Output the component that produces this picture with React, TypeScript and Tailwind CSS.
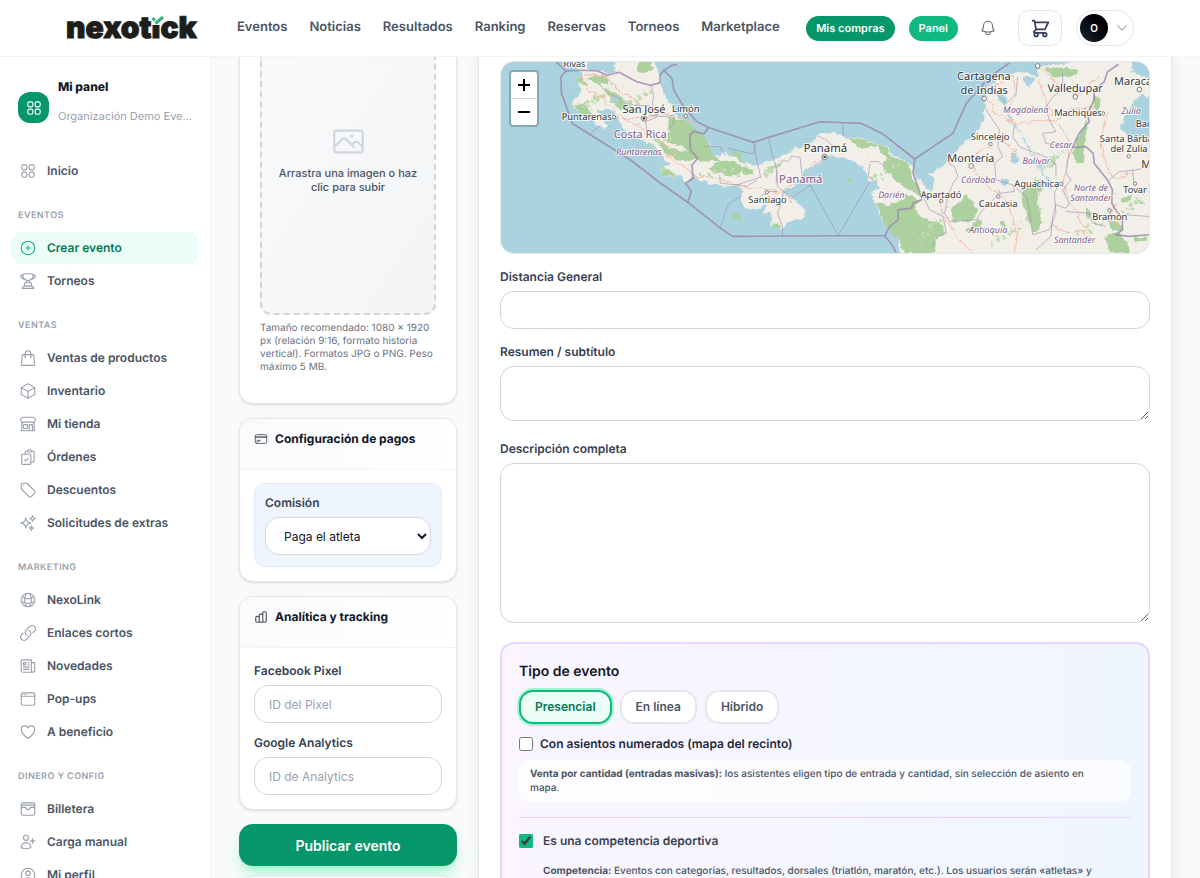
import type { ComponentType, ReactNode } from "react";
import { HiOutlineChartBar, HiOutlineShoppingCart } from "react-icons/hi";
import {
	HiOutlineBell,
	HiOutlineBuildingStorefront,
	HiOutlineChevronDown,
	HiOutlineClipboardDocumentCheck,
	HiOutlineCreditCard,
	HiOutlineCube,
	HiOutlineGlobeAlt,
	HiOutlineHeart,
	HiOutlineLink,
	HiOutlineNewspaper,
	HiOutlinePhoto,
	HiOutlinePlusCircle,
	HiOutlineShoppingBag,
	HiOutlineSparkles,
	HiOutlineSquares2X2,
	HiOutlineTag,
	HiOutlineTrophy,
	HiOutlineUserCircle,
	HiOutlineUserPlus,
	HiOutlineWallet,
	HiOutlineWindow,
} from "react-icons/hi2";

type Icon = ComponentType<{ className?: string }>;

const navLinks = ["Eventos", "Noticias", "Resultados", "Ranking", "Reservas", "Torneos", "Marketplace"];

const menu: { title?: string; items: { icon: Icon; label: string; active?: boolean }[] }[] = [
	{ items: [{ icon: HiOutlineSquares2X2, label: "Inicio" }] },
	{
		title: "Eventos",
		items: [
			{ icon: HiOutlinePlusCircle, label: "Crear evento", active: true },
			{ icon: HiOutlineTrophy, label: "Torneos" },
		],
	},
	{
		title: "Ventas",
		items: [
			{ icon: HiOutlineShoppingBag, label: "Ventas de productos" },
			{ icon: HiOutlineCube, label: "Inventario" },
			{ icon: HiOutlineBuildingStorefront, label: "Mi tienda" },
			{ icon: HiOutlineClipboardDocumentCheck, label: "Órdenes" },
			{ icon: HiOutlineTag, label: "Descuentos" },
			{ icon: HiOutlineSparkles, label: "Solicitudes de extras" },
		],
	},
	{
		title: "Marketing",
		items: [
			{ icon: HiOutlineGlobeAlt, label: "NexoLink" },
			{ icon: HiOutlineLink, label: "Enlaces cortos" },
			{ icon: HiOutlineNewspaper, label: "Novedades" },
			{ icon: HiOutlineWindow, label: "Pop-ups" },
			{ icon: HiOutlineHeart, label: "A beneficio" },
		],
	},
	{
		title: "Dinero y config",
		items: [
			{ icon: HiOutlineWallet, label: "Billetera" },
			{ icon: HiOutlineUserPlus, label: "Carga manual" },
			{ icon: HiOutlineUserCircle, label: "Mi perfil" },
		],
	},
];

function Logo() {
	return (
		<a href="#" className="relative block text-[30px] leading-9 font-black text-[#1d1d1b] [-webkit-text-stroke:1px_#1d1d1b]">
			nexotick
			<svg viewBox="0 0 14 12" className="absolute top-1 left-[85px] h-3 w-[14px]" aria-hidden="true">
				<rect x="1" width="10" height="11" fill="#fff" />
				<path d="M1.5 4l2.5 2.5M4.5 9.5l7.5-6.5" stroke="#34b27b" strokeWidth="3" fill="none" />
			</svg>
		</a>
	);
}

function Header() {
	return (
		<header className="shrink-0 border-b border-gray-100 bg-white">
			<div className="mx-auto flex h-14 w-full max-w-[1068px] items-center">
				<div className="w-[171px]">
					<Logo />
				</div>
				<nav className="flex gap-[22px]">
					{navLinks.map((link) => (
						<a key={link} href="#" className="text-[13px] font-semibold text-gray-600">
							{link}
						</a>
					))}
				</nav>
				<div className="ml-auto flex items-center gap-[14px]">
					<a href="#" className="rounded-full bg-[#059669] px-[10px] py-1 text-[11px] leading-[17px] font-semibold text-white">
						Mis compras
					</a>
					<a href="#" className="rounded-full bg-[#10b981] px-[10px] py-1 text-[11px] leading-[17px] font-semibold text-white">
						Panel
					</a>
					<button type="button" aria-label="Notificaciones" className="flex w-8 justify-center text-gray-500">
						<HiOutlineBell className="size-[18px]" />
					</button>
					<button
						type="button"
						aria-label="Carrito"
						className="flex h-9 w-11 items-center justify-center rounded-[11px] border border-gray-200 text-gray-700"
					>
						<HiOutlineShoppingCart className="size-[21px]" />
					</button>
					<button
						type="button"
						aria-label="Cuenta"
						className="flex h-9 items-center gap-[7px] rounded-full border border-gray-200 pr-1 pl-[3px] text-gray-500"
					>
						<span className="flex size-[28px] items-center justify-center rounded-full bg-gradient-to-tr from-gray-800 to-black text-[10px] font-semibold text-white">
							O
						</span>
						<HiOutlineChevronDown className="size-[14px]" />
					</button>
				</div>
			</div>
		</header>
	);
}

function Sidebar() {
	return (
		<aside className="w-[211px] shrink-0 overflow-hidden border-r border-gray-100 bg-white px-[11px] pt-5">
			<div className="mb-[29px] flex gap-[9px] pl-[7px]">
				<span className="mt-[15px] flex size-[31px] shrink-0 items-center justify-center rounded-xl bg-[#059669] text-white">
					<HiOutlineSquares2X2 className="size-[18px]" />
				</span>
				<div className="min-w-0">
					<p className="text-[12px] leading-5 font-extrabold text-gray-900">Mi panel</p>
					<p className="mt-[9px] text-[11px] leading-5 text-gray-400">Organización Demo Eve...</p>
				</div>
			</div>
			<nav className="flex flex-col gap-[21px]">
				{menu.map((group, i) => (
					<div key={i}>
						{group.title && (
							<h3 className="mb-2 px-[7px] text-[9px] leading-4 font-semibold tracking-wider text-gray-400 uppercase">
								{group.title}
							</h3>
						)}
						<ul className="flex flex-col gap-px">
							{group.items.map(({ icon: ItemIcon, label, active }) => (
								<li key={label}>
									<a
										href="#"
										className={
											active
												? "flex h-8 items-center gap-[10px] rounded-[11px] bg-[#ecfdf5] px-2 text-[12px] font-semibold text-[#047857]"
												: "flex h-8 items-center gap-[10px] rounded-[11px] px-2 text-[12px] font-semibold text-gray-600"
										}
									>
										<ItemIcon className={active ? "size-[18px] text-[#10b981]" : "size-[18px] text-gray-400"} />
										{label}
									</a>
								</li>
							))}
						</ul>
					</div>
				))}
			</nav>
		</aside>
	);
}

function Card({ icon: CardIcon, title, children }: { icon: Icon; title: string; children: ReactNode }) {
	return (
		<section className="shrink-0 overflow-hidden rounded-[14px] border border-gray-200 bg-white shadow-sm">
			<div className="flex items-start gap-[7px] border-b border-gray-100 bg-gradient-to-r from-gray-50 to-white px-[14px] pt-[10px] pb-5 text-gray-600">
				<CardIcon className="mt-[3px] size-[14px]" />
				<h2 className="text-[12px] leading-5 font-bold text-gray-900">{title}</h2>
			</div>
			<div className="px-[14px] pt-[13px] pb-[14px]">{children}</div>
		</section>
	);
}

const labelClass = "block text-[12px] leading-5 font-semibold text-gray-700";
const fieldClass =
	"block w-full rounded-[14px] border border-gray-300 bg-white px-[14px] text-[12px] text-gray-900 placeholder:text-gray-400";

function SideColumn() {
	return (
		<div className="flex w-[218px] shrink-0 flex-col gap-[14px]">
			<section className="shrink-0 rounded-b-[14px] border border-t-0 border-gray-200 bg-white px-5 pb-[29px] shadow-sm">
				<button
					type="button"
					className="flex w-full flex-col items-center rounded-b-[11px] border-2 border-t-0 border-dashed border-gray-300 bg-gradient-to-br from-gray-50 to-gray-100 px-4 pt-[67px] pb-[119px]"
				>
					<HiOutlinePhoto className="size-[35px] text-gray-300" />
					<span className="mt-[7px] text-[11px] leading-[14px] font-medium text-gray-600">
						Arrastra una imagen o haz clic para subir
					</span>
				</button>
				<p className="mt-[7px] text-[10px] leading-[13px] text-gray-500">
					Tamaño recomendado: 1080 × 1920 px (relación 9:16, formato historia vertical). Formatos JPG o PNG. Peso máximo 5 MB.
				</p>
			</section>

			<Card icon={HiOutlineCreditCard} title="Configuración de pagos">
				<div className="rounded-[11px] border border-blue-100 bg-blue-50 px-[10px] pt-[9px] pb-[11px]">
					<label htmlFor="comision" className={labelClass}>
						Comisión
					</label>
					<select
						id="comision"
						className="mt-1 block h-[38px] w-full rounded-[14px] border border-gray-300 bg-white pl-[14px] text-[12px] text-gray-900"
					>
						<option>Paga el atleta</option>
					</select>
				</div>
			</Card>

			<Card icon={HiOutlineChartBar} title="Analítica y tracking">
				<label htmlFor="pixel" className={labelClass}>
					Facebook Pixel
				</label>
				<input id="pixel" type="text" placeholder="ID del Pixel" className={`mt-1 h-[38px] ${fieldClass}`} />
				<label htmlFor="analytics" className={`mt-[10px] ${labelClass}`}>
					Google Analytics
				</label>
				<input id="analytics" type="text" placeholder="ID de Analytics" className={`mt-1 h-[38px] ${fieldClass}`} />
			</Card>

			<div className="flex flex-col gap-[10px]">
				<button
					type="button"
					className="h-[42px] rounded-[14px] bg-[#059669] text-[14px] font-semibold text-white shadow-lg shadow-emerald-200"
				>
					Publicar evento
				</button>
				<button
					type="button"
					aria-label="Guardar borrador"
					className="h-[42px] rounded-[14px] border border-gray-200 bg-white"
				/>
			</div>
		</div>
	);
}

// Map geometry is drawn at three units per pixel.
const land =
	"M235 20L262 62 285 85 245 85 270 100 268 125 248 150 250 185 275 205 300 205 315 225 340 243 350 225 335 200 320 180 345 175 370 190 385 205 395 235 430 265 470 275 505 300 520 330 540 345 510 350 505 370 550 388 558 380 552 365 575 380 590 400 605 385 640 395 680 405 735 410 760 425 755 450 765 475 800 483 815 465 828 470 820 485 840 490 845 530 870 533 895 515 925 510 947 500 945 480 920 455 895 440 880 425 905 415 925 390 935 370 960 355 985 340 1000 322 1020 318 1055 325 1080 330 1120 350 1135 375 1135 395 1160 395 1170 410 1140 430 1155 460 1170 500 1200 540 1225 560 1230 590 1240 625 2000 625 2000 75 1965 70 1935 50 1925 20 1750 20 1750 36 1725 42 1670 45 1648 55 1645 75 1590 65 1555 70 1525 90 1500 110 1482 140 1485 170 1480 200 1470 235 1455 260 1430 270 1410 295 1380 325 1365 345 1335 362 1320 370 1332 400 1335 420 1322 425 1305 405 1275 375 1260 345 1230 325 1205 305 1170 285 1135 270 1100 265 1075 265 1040 250 1010 245 985 255 970 275 950 290 920 295 890 310 855 330 800 345 770 340 730 320 700 305 690 320 660 310 662 285 640 265 610 240 580 215 550 180 530 145 512 110 510 80 485 20Z";

const water = [
	"M300 20H375L370 60 388 68 330 66 290 54Z",
	"M1982 140L1955 135 1930 160 1912 195 1895 225 1915 262 1945 275 2000 275 2000 140Z",
	"M1918 20L1930 60 1960 80 2000 85V20Z",
	"M1605 85L1635 80 1625 105 1612 108Z",
	"M320 180L345 178 365 195 385 205 372 215 345 205Z",
	"M355 130L380 142 385 165 365 150Z",
	"M1535 130L1555 145 1545 160 1528 150Z",
	"M1570 310L1590 330 1575 345 1560 330ZM1535 385L1560 395 1550 410 1530 400ZM1640 330L1665 340 1650 350Z",
	"M1115 385L1150 400 1170 405 1165 420 1125 408Z",
];

const forest = [
	"M540 200L590 215 640 255 670 310 690 335 640 335 600 320 575 290 530 280 535 240Z",
	"M600 250L640 262 668 318 640 335 602 310Z",
	"M690 335L730 335 760 350 790 358 788 378 760 368 735 380 695 372 655 350Z",
	"M515 345L530 360 555 375 555 388 505 370Z",
	"M480 250L540 290 600 310 620 330 560 330 520 305Z",
	"M340 110L370 125 395 150 420 165 455 185 430 190 380 168 350 140Z",
	"M250 165L285 160 305 185 300 200 270 205 255 188Z",
	"M445 33H480L485 60 460 72 440 55Z",
	"M310 75L345 82 355 105 320 100 290 85Z",
	"M250 85L280 85 285 105 260 95Z",
	"M735 483L752 500 755 518 730 505Z",
	"M850 515L870 520 865 533 847 530Z",
	"M725 300L745 310 758 335 735 322Z",
	"M1075 265L1130 270 1180 292 1215 320 1250 340 1265 375 1290 420 1290 440 1260 420 1230 400 1200 370 1180 340 1190 320 1160 290 1120 292 1095 285Z",
	"M1155 460L1200 465 1230 455 1250 435 1290 450 1275 480 1300 510 1350 520 1370 545 1340 570 1335 610 1250 610 1230 570 1195 540Z",
	"M1380 480L1410 450 1430 432 1455 465 1470 480 1450 515 1390 515Z",
	"M1595 432L1640 388 1660 392 1650 430 1645 450 1655 500 1650 540 1632 545 1615 500 1600 465Z",
	"M1785 225L1795 205 1788 280 1785 340 1760 340 1750 300Z",
	"M1668 50L1770 55 1765 75 1700 85 1680 70Z",
	"M1815 135L1835 150 1828 185 1810 170Z",
	"M1860 545L1890 550 1920 580 1915 608 1860 608 1850 570Z",
	"M1890 450L1930 430 1925 450 1900 465ZM1930 560L1975 560 1975 572 1935 575ZM1940 445L1970 465 1950 460Z",
	"M1430 540L1465 510 1480 520 1440 550ZM1525 515L1545 510 1545 530 1530 530ZM1740 575L1750 560 1748 590Z",
	"M1790 470L1810 490 1800 510 1790 495ZM1855 500L1890 520 1900 545 1865 540Z",
	"M1690 310L1700 340 1685 350ZM1075 385L1088 388 1085 400 1072 395ZM830 350L850 350 845 360Z",
];

const borders = [
	"M195 33L225 62 275 60 320 62 350 75 385 66 440 95 480 105 508 98 508 75 520 60 545 45 560 42",
	"M225 62L210 80 212 130 245 220 300 255 420 330 510 400 592 457 690 535 727 560 1045 558 1185 558 1210 590 1218 608",
	"M520 60L545 85 550 120 580 170 620 215 655 232 790 277 835 262 990 215 1115 220 1180 252 1275 327 1390 250 1430 160 1500 80 1560 38",
	"M655 232L640 252 610 243 598 255 600 300 622 325 605 345 608 385 585 400 603 425 592 457",
	"M1275 327L1270 370 1290 425 1295 450 1270 460 1265 475 1225 480 1225 510 1200 530 1185 558",
	"M1888 42L1855 65 1845 95 1815 120 1815 150 1795 190 1800 215 1770 250 1750 292 1790 290 1812 310 1815 340 1855 390 1870 420 1868 460 1880 480 1900 510 1900 540 1880 555 1920 560 1980 555",
];

const thinBorders = [
	"M325 100L350 130 400 150 430 165 480 168 478 195 530 200 550 195 548 225 530 240",
	"M480 105L490 135 485 165 500 200 465 215 470 250",
	"M300 250L330 225M690 535L712 465 752 438M835 262L845 310 860 360 858 400M790 277L800 330 812 385",
	"M688 375L690 400 740 405 810 382M740 405L770 410 800 390",
	"M860 355L880 330 895 335 905 318 930 322 935 370 945 380M860 360L862 410 880 425 870 470 862 490 877 530 877 560M805 460L810 440 840 425 862 425",
	"M960 405L1045 558 1140 395M880 425L905 445 962 405M1058 222L1060 258M712 295L790 312 795 280M640 290L690 290 705 318",
	"M1140 340L1135 380 1150 390M1140 335L1165 335 1185 350M985 258L1010 270 1030 290",
	"M1485 170L1510 210 1530 240 1525 290 1540 320 1515 340 1520 390 1570 405 1575 425 1530 430 1515 445 1480 480 1460 510 1380 515 1365 490 1375 440 1390 400 1405 380 1395 350 1375 340",
	"M1500 110L1550 160 1580 130 1585 80M1550 210L1575 225 1570 260 1590 290 1640 310 1680 325 1700 345 1700 380",
	"M1720 70L1720 120 1690 140 1670 170 1680 210 1700 245 1660 250 1670 280 1700 285",
	"M1570 405L1610 440 1620 480 1630 555 1680 540 1700 490 1695 430 1710 400",
	"M1750 292L1735 330 1730 370 1745 390 1720 420 1740 460 1730 475 1700 465 1690 500 1685 560 1640 600",
	"M1300 440L1320 480 1360 500 1370 550 1345 560 1325 590M1860 390L1890 365 1940 360 1980 350M1910 495L1980 500M1730 485L1800 490 1810 520 1850 530M1930 360L1935 400",
];

const roads = [
	"M275 75L290 120 330 140 370 180 400 205 460 205 500 190 580 200 640 240",
	"M285 70L350 82 390 130 450 150M400 205L470 240 530 290 560 310 530 320 600 360 610 385 660 378 750 410 840 420 870 425 910 460",
	"M870 425L960 375 965 345 1000 322 1015 318",
	"M1485 140L1520 190 1580 220 1640 210 1700 215 1750 175 1815 170",
	"M1500 110L1530 100 1570 70 1580 130 1560 170 1565 220M1645 80L1660 130 1690 200 1720 230 1740 280 1735 350 1720 400 1740 450 1780 520 1800 560",
	"M1445 345L1480 400 1530 430 1550 450 1570 500 1580 550 1575 608M1350 440L1360 490 1400 560 1450 608",
	"M1655 50L1700 100 1760 135 1830 80M1860 185L1835 260 1850 340 1870 385 1930 370M1880 460L1860 510 1900 530M1690 520L1720 545 1790 545",
	"M1540 270L1580 300 1560 330M1380 340L1430 320 1500 290",
];

// Scattered tree cover along the mountain ranges.
const groves = [
	[270, 110, 110, 70],
	[400, 100, 110, 80],
	[440, 230, 140, 90],
	[600, 340, 170, 50],
	[820, 330, 60, 50],
	[1130, 300, 130, 120],
	[1280, 470, 100, 120],
	[1500, 510, 120, 80],
	[1740, 480, 130, 110],
	[1660, 300, 60, 60],
	[1880, 420, 100, 100],
].flatMap(([x, y, w, h]) =>
	Array.from({ length: 16 }, (_, i) => ({
		x: x + ((i * 37) % 100) * (w / 100),
		y: y + ((i * 61 + 13) % 100) * (h / 100),
		r: 2 + ((i * 7) % 5),
	})),
);

const ponds = Array.from({ length: 44 }, (_, i) => ({
	x: 1520 + ((i * 47) % 170),
	y: 120 + ((i * 83) % 300),
	r: 2 + (i % 4),
}));

const places: { x: number; y: number; text: string; size?: number; anchor?: "start" | "end" }[] = [
	{ x: 251, y: 49, text: "Rivas", size: 27 },
	{ x: 460, y: 188, text: "San José", size: 33 },
	{ x: 586, y: 187, text: "Limón", size: 28 },
	{ x: 288, y: 209, text: "Puntarenas", size: 28 },
	{ x: 1006, y: 305, text: "Panamá", size: 34 },
	{ x: 832, y: 458, text: "Santiago", size: 28 },
	{ x: 1483, y: 90, text: "Cartagena", size: 33 },
	{ x: 1484, y: 131, text: "de Indias", size: 33 },
	{ x: 1758, y: 126, text: "Valledupar", size: 33 },
	{ x: 1875, y: 104, text: "Maracaibo", size: 33, anchor: "start" },
	{ x: 1766, y: 199, text: "Machiques", size: 28 },
	{ x: 1502, y: 271, text: "Sincelejo", size: 28 },
	{ x: 1444, y: 335, text: "Montería", size: 33 },
	{ x: 1354, y: 443, text: "Apartadó", size: 28 },
	{ x: 1642, y: 412, text: "Aguachica", size: 28 },
	{ x: 1526, y: 472, text: "Caucasia", size: 28 },
	{ x: 1862, y: 512, text: "Bramón", size: 28 },
	{ x: 1938, y: 428, text: "Tovar", size: 28 },
	{ x: 1940, y: 231, text: "Bachaquero", size: 28, anchor: "start" },
	{ x: 1832, y: 276, text: "Santa Bárbara", size: 28, anchor: "start" },
	{ x: 1920, y: 307, text: "del Zulia", size: 28 },
	{ x: 1957, y: 355, text: "Mérida", size: 33, anchor: "start" },
];

const regions = [
	{ x: 445, y: 315, text: "Puntarenas" },
	{ x: 1205, y: 443, text: "Darién" },
	{ x: 1609, y: 190, text: "Magdalena" },
	{ x: 1926, y: 192, text: "Zulia" },
	{ x: 1715, y: 295, text: "Cesar" },
	{ x: 1641, y: 341, text: "Bolívar" },
	{ x: 1466, y: 400, text: "Córdoba" },
	{ x: 1805, y: 424, text: "Norte de" },
	{ x: 1805, y: 454, text: "Santander" },
	{ x: 1496, y: 551, text: "Antioquia" },
	{ x: 1756, y: 579, text: "Santander" },
];

const towns = [
	[370, 201, 5],
	[586, 198, 5],
	[830, 427, 5],
	[1484, 145, 7],
	[1645, 47, 7],
	[1758, 140, 7],
	[1951, 118, 7],
	[1842, 190, 5],
	[1503, 282, 5],
	[1445, 348, 7],
	[1355, 453, 5],
	[1716, 402, 5],
	[1527, 440, 5],
	[1861, 482, 5],
	[1938, 401, 5],
	[1919, 319, 5],
	[460, 205, 8],
	[1004, 321, 8],
];

function EventMap() {
	return (
		<div className="relative h-[193px] overflow-hidden rounded-[14px] border border-gray-200 bg-[#aad3df]">
			<svg
				viewBox="30 33 1950 579"
				preserveAspectRatio="xMidYMid slice"
				className="size-full"
				role="img"
				aria-label="Mapa"
				fontFamily="'Noto Sans', sans-serif"
				textAnchor="middle"
			>
				<defs>
					<filter id="coast" x="-5%" y="-5%" width="110%" height="110%">
						<feTurbulence type="fractalNoise" baseFrequency="0.04" numOctaves="3" seed="4" result="noise" />
						<feDisplacementMap in="SourceGraphic" in2="noise" scale="22" xChannelSelector="R" yChannelSelector="G" />
					</filter>
				</defs>
				<g filter="url(#coast)">
					<path d={land} fill="#f2efe9" />
					{forest.map((d) => (
						<path key={d} d={d} fill="#add19e" />
					))}
					{groves.map((g, i) => (
						<circle key={i} cx={g.x} cy={g.y} r={g.r} fill="#c0dab0" />
					))}
					{water.map((d) => (
						<path key={d} d={d} fill="#aad3df" />
					))}
					{ponds.map((p, i) => (
						<circle key={i} cx={p.x} cy={p.y} r={p.r} fill="#b5d8e2" />
					))}
					<g fill="none" stroke="#f6b9a8" strokeWidth="3">
						{roads.map((d) => (
							<path key={d} d={d} />
						))}
					</g>
				</g>
				<g fill="none" stroke="#9a86ab" strokeLinejoin="round">
					{thinBorders.map((d) => (
						<path key={d} d={d} strokeWidth="2.5" opacity="0.7" />
					))}
					{borders.map((d) => (
						<path key={d} d={d} strokeWidth="5" opacity="0.8" />
					))}
				</g>
				{towns.map(([x, y, r]) => (
					<circle key={`${x}-${y}`} cx={x} cy={y} r={r} fill="#fff" stroke="#666" strokeWidth="2.5" />
				))}
				<circle cx="460" cy="205" r="4" fill="#444" />
				<circle cx="1004" cy="321" r="4" fill="#444" />
				<g fill="#333" stroke="#fff" strokeWidth="6" strokeOpacity="0.8" paintOrder="stroke" strokeLinejoin="round">
					{places.map((p) => (
						<text key={p.text} x={p.x} y={p.y} fontSize={p.size} textAnchor={p.anchor}>
							{p.text}
						</text>
					))}
				</g>
				<g fill="#7d5b8c" stroke="#fff" strokeWidth="6" strokeOpacity="0.8" paintOrder="stroke" strokeLinejoin="round">
					<text x="449" y="264" fontSize="33">
						Costa Rica
					</text>
					<text x="932" y="399" fontSize="34">
						Panamá
					</text>
					<g fontSize="27" fontStyle="italic">
						{regions.map((r) => (
							<text key={`${r.text}-${r.y}`} x={r.x} y={r.y}>
								{r.text}
							</text>
						))}
					</g>
				</g>
			</svg>
			<div className="absolute top-[8px] left-[8px] flex flex-col rounded border-2 border-black/20 bg-white bg-clip-padding text-black">
				<button type="button" aria-label="Acercar" className="flex h-[27px] w-[26px] items-center justify-center border-b border-gray-300">
					<svg viewBox="0 0 12 12" className="size-3" stroke="currentColor" strokeWidth="2">
						<path d="M0 6h12M6 0v12" />
					</svg>
				</button>
				<button type="button" aria-label="Alejar" className="flex h-[26px] w-[26px] items-center justify-center">
					<svg viewBox="0 0 12 12" className="size-3" stroke="currentColor" strokeWidth="2">
						<path d="M0 6h12" />
					</svg>
				</button>
			</div>
		</div>
	);
}

function EventType() {
	const pill = "h-[34px] rounded-[14px] border-2 px-[14px] text-[12px] font-semibold";
	return (
		<section className="mt-[19px] rounded-[14px] border-2 border-purple-200 bg-gradient-to-r from-purple-50 to-blue-50 px-[17px] pt-[18px] pb-8">
			<h2 className="text-[14px] leading-5 font-semibold text-gray-900">Tipo de evento</h2>
			<div className="mt-2 flex gap-2">
				<button type="button" className={`${pill} border-[#10b981] bg-[#ecfdf5] text-[#047857] ring-2 ring-[#a7f3d0]`}>
					Presencial
				</button>
				<button type="button" className={`${pill} border-gray-200 bg-white text-gray-600`}>
					En línea
				</button>
				<button type="button" className={`${pill} border-gray-200 bg-white text-gray-600`}>
					Híbrido
				</button>
			</div>
			<label className="mt-[10px] flex items-center gap-[7px] text-[12px] leading-5 font-semibold text-gray-800">
				<input type="checkbox" className="size-[14px]" />
				Con asientos numerados (mapa del recinto)
			</label>
			<p className="mt-[6px] rounded-[11px] bg-white/70 py-[7px] pr-[30px] pl-[11px] text-[10px] leading-[14px] font-medium text-gray-600">
				<strong className="font-bold">Venta por cantidad (entradas masivas):</strong> los asistentes eligen tipo de entrada y
				cantidad, sin selección de asiento en mapa.
			</p>
			<div className="mt-[15px] border-t border-purple-200 pt-[13px]">
				<label className="flex items-center gap-[10px] text-[12px] leading-5 font-semibold text-gray-700">
					<input type="checkbox" defaultChecked className="size-[14px] accent-[#10b981]" />
					Es una competencia deportiva
				</label>
				<p className="mt-[13px] pl-6 text-[10px] leading-[14px] font-medium text-gray-600">
					<strong className="font-bold">Competencia:</strong> Eventos con categorías, resultados, dorsales (triatlón, maratón,
					etc.). Los usuarios serán «atletas» y
				</p>
			</div>
		</section>
	);
}

export default function App() {
	return (
		<div className="flex h-screen flex-col overflow-hidden bg-gray-50 font-[Inter,sans-serif] [text-rendering:geometricPrecision]">
			<Header />
			<div className="flex min-h-0 flex-1">
				<Sidebar />
				<main className="flex min-w-0 flex-1 gap-[21px] overflow-hidden pr-7 pl-7">
					<SideColumn />
					<div className="min-w-0 flex-1 self-start border-x border-gray-200 bg-white px-[21px] pt-1 shadow-[0_0_14px_rgba(0,0,0,0.08)]">
						<EventMap />
						<label htmlFor="distancia" className={`mt-[13px] ${labelClass}`}>
							Distancia General
						</label>
						<input id="distancia" type="text" className={`mt-1 h-[38px] ${fieldClass}`} />
						<label htmlFor="resumen" className={`mt-[13px] ${labelClass}`}>
							Resumen / subtítulo
						</label>
						<textarea id="resumen" className={`mt-1 h-[55px] ${fieldClass}`} />
						<label htmlFor="descripcion" className={`mt-[18px] ${labelClass}`}>
							Descripción completa
						</label>
						<textarea id="descripcion" className={`mt-1 h-[160px] ${fieldClass}`} />
						<EventType />
					</div>
				</main>
			</div>
		</div>
	);
}
